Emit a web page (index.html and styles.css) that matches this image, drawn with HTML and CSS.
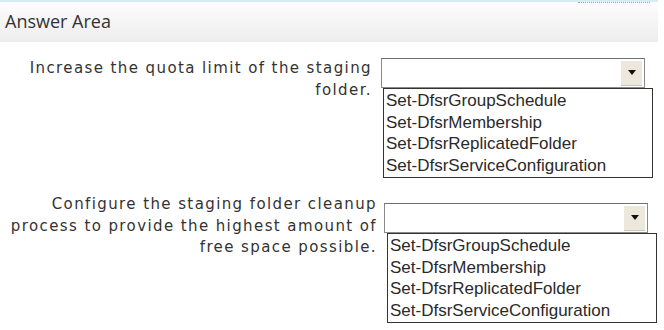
FILE: index.html
```
<!DOCTYPE html>
<html lang="en">
<head>
    <meta charset="UTF-8">
    <title>Answer Area</title>
    <link rel="stylesheet" href="styles.css">
</head>
<body>
    <div class="header">
        <span class="dots"></span>
        <h2>Answer Area</h2>
    </div>

    <div class="question q1">
        <div class="prompt">Increase the quota limit of the staging<br>folder.</div>
        <div class="answer">
            <div class="select"><span class="arrow-btn"><span class="arrow"></span></span></div>
            <ul class="options">
                <li>Set-DfsrGroupSchedule</li>
                <li>Set-DfsrMembership</li>
                <li>Set-DfsrReplicatedFolder</li>
                <li>Set-DfsrServiceConfiguration</li>
            </ul>
        </div>
    </div>

    <div class="question q2">
        <div class="prompt">Configure the staging folder cleanup<br>process to provide the highest amount of<br>free space possible.</div>
        <div class="answer">
            <div class="select"><span class="arrow-btn"><span class="arrow"></span></span></div>
            <ul class="options">
                <li>Set-DfsrGroupSchedule</li>
                <li>Set-DfsrMembership</li>
                <li>Set-DfsrReplicatedFolder</li>
                <li>Set-DfsrServiceConfiguration</li>
            </ul>
        </div>
    </div>
</body>
</html>
```
FILE: styles.css
```
body {
    margin: 0;
    background: #fff;
    color: #222;
    width: 664px;
}

.header {
    position: relative;
    height: 40px;
    border-top: 2px solid #d4ecf3;
    background: linear-gradient(#fdfdfd, #ededed);
    margin-right: 6px;
}

.header h2 {
    margin: 0;
    padding: 7px 0 0 5px;
    font-family: "Open Sans", sans-serif;
    font-weight: normal;
    font-size: 18px;
    color: #333;
}

.dots {
    position: absolute;
    top: 0;
    left: 578px;
    width: 72px;
    border-top: 1px dotted #9aa;
}

.question {
    display: flex;
    align-items: flex-start;
}

.q1 {
    margin-top: 16px;
}

.q2 {
    margin-top: 25px;
}

.prompt {
    font-family: "DejaVu Sans", Verdana, sans-serif;
    font-size: 15px;
    letter-spacing: 1.4px;
    line-height: 21.5px;
    text-align: right;
    white-space: nowrap;
    color: #333;
}

.q1 .prompt {
    width: 372px;
}

.q2 .prompt {
    width: 377px;
    margin-top: -9px;
}

.answer {
    margin-left: 9px;
}

.q2 .answer {
    margin-left: 7px;
}

.select {
    display: flex;
    justify-content: flex-end;
    align-items: center;
    width: 262px;
    height: 28px;
    border: 1px solid #8a8a8a;
    border-top-color: #6f6f6f;
    background: #fff;
}

.arrow-btn {
    display: flex;
    align-items: center;
    justify-content: center;
    width: 21px;
    height: 24px;
    margin-right: 2px;
    background: #ece9dc;
    border-bottom: 1px solid #c9c6b8;
}

.arrow {
    width: 0;
    height: 0;
    border-left: 4px solid transparent;
    border-right: 4px solid transparent;
    border-top: 5px solid #111;
}

.options {
    list-style: none;
    margin: 0 0 0 2px;
    padding: 1px 0 1px 2px;
    width: 266px;
    border: 1px solid #333;
    font-family: "Liberation Sans", Arial, sans-serif;
    font-size: 17px;
    line-height: 21.5px;
    color: #2a2a2a;
}

.q2 .options {
    margin-left: 3px;
}
```
